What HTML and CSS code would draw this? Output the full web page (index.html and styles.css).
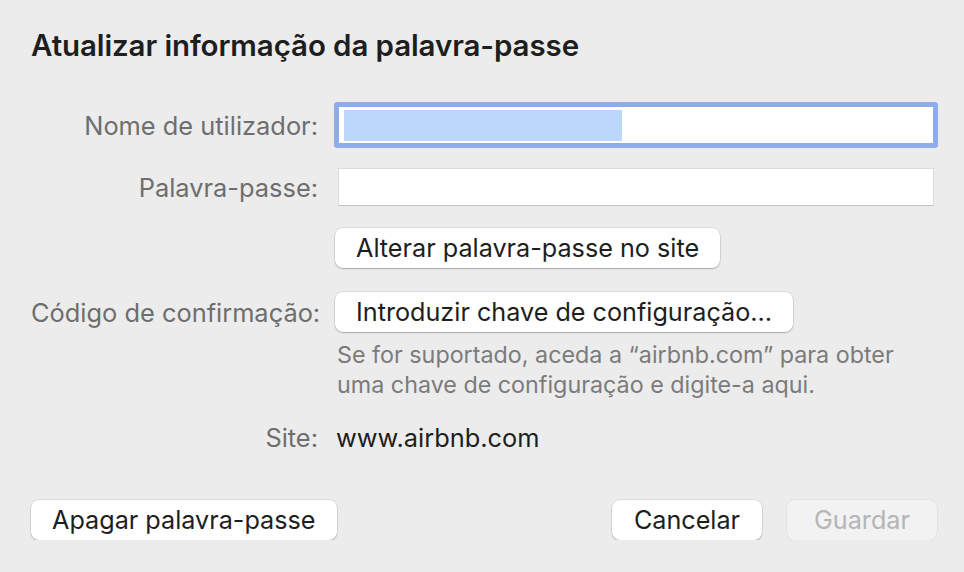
FILE: index.html
```html
<!DOCTYPE html>
<html>
<head>
    <meta name="viewport" content="width=device-width, initial-scale=1.0">
    <link rel="stylesheet" href="styles.css">
</head>
<body>
    <div class="dialog">
        <h1>Atualizar informação da palavra-passe</h1>

        <div class="form">
            <div class="row row-user">
                <label class="label" for="username">Nome de utilizador:</label>
                <div class="input focused" id="username">
                    <span class="selection"></span>
                </div>
            </div>

            <div class="row row-pass">
                <label class="label" for="password">Palavra-passe:</label>
                <div class="input" id="password"></div>
            </div>

            <div class="row row-change">
                <span class="label"></span>
                <div>
                    <button class="btn">Alterar palavra-passe no site</button>
                </div>
            </div>

            <div class="row row-code">
                <span class="label">Código de confirmação:</span>
                <div>
                    <button class="btn">Introduzir chave de configuração…</button>
                </div>
            </div>

            <div class="row row-help">
                <span class="label"></span>
                <p class="help">Se for suportado, aceda a “airbnb.com” para obter<br>uma chave de configuração e digite-a aqui.</p>
            </div>

            <div class="row row-site">
                <span class="label">Site:</span>
                <span class="value">www.airbnb.com</span>
            </div>
        </div>

        <div class="footer">
            <button class="btn">Apagar palavra-passe</button>
            <div class="footer-right">
                <button class="btn wide">Cancelar</button>
                <button class="btn wide" disabled>Guardar</button>
            </div>
        </div>
    </div>
</body>
</html>
```

FILE: styles.css
```css
body {
    margin: 0;
    background-color: #ececec;
    font-family: Inter, "Noto Sans", sans-serif;
    color: #1e1e1e;
}

.dialog {
    padding: 28px 26px 0 31px;
}

h1 {
    margin: 0;
    font-size: 29.5px;
    font-weight: 600;
    line-height: 34px;
    letter-spacing: -0.1px;
    color: #1e1e1e;
}

.form {
    margin-top: 39px;
    font-size: 25.4px;
}

.row {
    display: grid;
    grid-template-columns: 287px 1fr;
    column-gap: 16px;
    align-items: center;
}

.label {
    text-align: right;
    white-space: nowrap;
    color: #6e6e6e;
}

.row-user {
    height: 48px;
}

.row-pass {
    margin-top: 19px;
    height: 38px;
}

.row-change {
    margin-top: 22px;
}

.row-code {
    margin-top: 24px;
}

.row-help {
    margin-top: 8px;
    align-items: start;
}

.row-site {
    margin-top: 23px;
    line-height: 30px;
}

.input {
    box-sizing: border-box;
    height: 38px;
    margin: 0 4px;
    background-color: #fff;
    border: 1px solid #dcdcdc;
    border-bottom-color: #c4c4c4;
}

.input.focused {
    border-radius: 1px;
    box-shadow: 0 0 0 4px #8eabea;
    border-color: #8eabea;
    padding: 3px 5px;
}

.selection {
    display: block;
    width: 278px;
    height: 31px;
    background-color: #bbd7fb;
}

.btn {
    height: 40px;
    padding: 0 21px;
    margin-left: 1px;
    font-family: inherit;
    font-size: 25.2px;
    color: #1e1e1e;
    background-color: #fff;
    border: none;
    border-radius: 8px;
    box-shadow: 0 0 0 0.5px rgba(0, 0, 0, 0.12), 0 1px 1.5px rgba(0, 0, 0, 0.25);
}

.btn:disabled {
    color: #b5b5b5;
    background-color: #f2f2f2;
    box-shadow: 0 0 0 0.5px rgba(0, 0, 0, 0.08);
}

.help {
    margin: 0 0 0 3px;
    font-size: 23.3px;
    line-height: 30px;
    color: #7b7b7b;
}

.value {
    margin-left: 2px;
}

.footer {
    display: flex;
    justify-content: space-between;
    margin: 47px 1px 0 -1px;
}

.footer-right {
    display: flex;
    gap: 24px;
}

.btn.wide {
    min-width: 150px;
}
```
